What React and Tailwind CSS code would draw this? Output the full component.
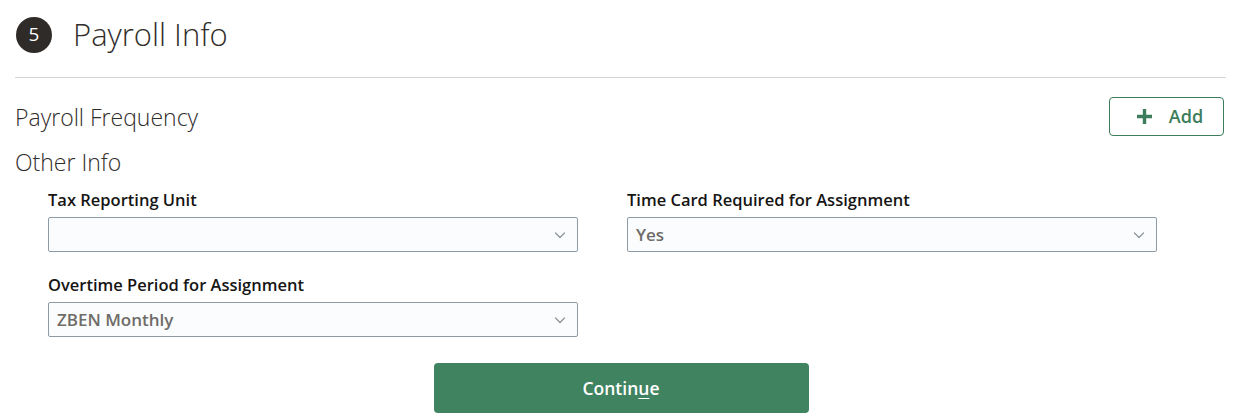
import React from "react";

function Chevron() {
  return (
    <svg width="14" height="14" viewBox="0 0 14 14" fill="none" className="shrink-0">
      <path d="M2.5 5 L7 9.5 L11.5 5" stroke="#8f969c" strokeWidth="1.3" strokeLinecap="round" strokeLinejoin="round" />
    </svg>
  );
}

function Select({ value }) {
  return (
    <div className="flex h-[35px] w-[530px] items-center justify-between rounded-[2px] border border-[#8d9ba6] bg-[#fbfcfd] pl-[8px] pr-[10px]">
      <span className="text-[17px] font-semibold text-[#6f6c69]">{value}</span>
      <Chevron />
    </div>
  );
}

function Field({ label, value }) {
  return (
    <div className="flex w-[530px] flex-col">
      <div className="mb-[6px] h-[22px] text-[16.5px] leading-[22px] font-semibold text-[#161513]">{label}</div>
      <Select value={value} />
    </div>
  );
}

export default function App() {
  return (
    <div className="h-[420px] w-[1241px] bg-white font-['Open_Sans',sans-serif] overflow-hidden">
      <div className="flex h-[77px] items-center pl-[16px] pb-[8px]">
        <div className="flex h-[36px] w-[36px] items-center justify-center rounded-full bg-[#2f2b28] text-[19px] text-white">5</div>
        <div className="ml-[21px] text-[31px] font-light leading-none text-[#312d2a]">Payroll Info</div>
      </div>
      <div className="mx-[15px] h-px bg-[#d5d5d5]" />
      <div className="mx-[15px] mt-[19px] flex items-center justify-between">
        <div className="text-[23px] font-light text-[#312d2a] leading-[30px]">Payroll Frequency</div>
        <button className="mr-[2px] flex h-[39px] w-[115px] items-center justify-center gap-[16px] rounded-[4px] border border-[#3d7d5b] bg-white pl-[6px] text-[18px] font-semibold text-[#3d7d5b]">
          <svg width="17" height="17" viewBox="0 0 17 17"><path d="M8.5 1 V16 M1 8.5 H16" stroke="#3d7d5b" strokeWidth="3.4" /></svg>
          <span>Add</span>
        </button>
      </div>
      <div className="mx-[15px] mt-[11px] text-[23px] font-light leading-[30px] text-[#312d2a]">Other Info</div>
      <div className="ml-[48px] mt-[12px] grid w-[1110px] grid-cols-[530px_530px] gap-x-[49px] gap-y-[22px]">
        <Field label="Tax Reporting Unit" value="" />
        <Field label="Time Card Required for Assignment" value="Yes" />
        <Field label="Overtime Period for Assignment" value="ZBEN Monthly" />
      </div>
      <div className="mt-[26px] flex justify-center">
        <button className="ml-[1px] flex h-[50px] w-[375px] items-center justify-center rounded-[4px] bg-[#3f8360] text-[17.5px] font-semibold text-white">
          <span>Contin<span className="underline underline-offset-[3px]">u</span>e</span>
        </button>
      </div>
    </div>
  );
}
